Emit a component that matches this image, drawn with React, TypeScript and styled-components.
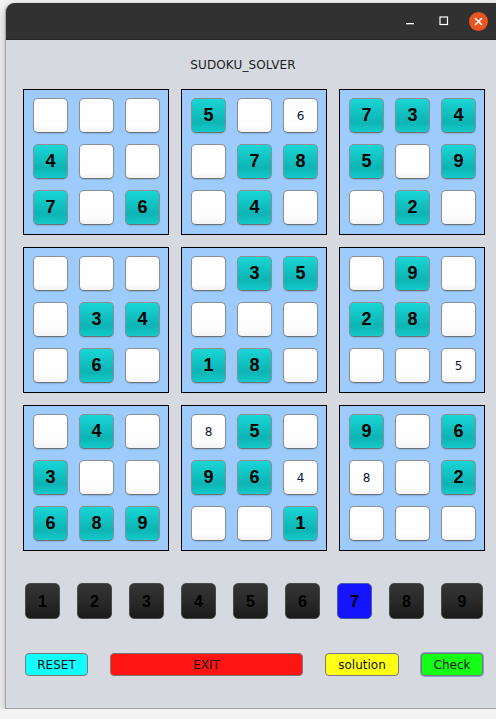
import React from "react";
import styled, { createGlobalStyle } from "styled-components";

const GlobalStyle = createGlobalStyle`
  html, body {
    margin: 0;
    padding: 0;
    background: #f3f3f3;
    overflow: hidden;
  }
  body {
    font-family: "DejaVu Sans", "Liberation Sans", sans-serif;
  }
`;

const Window = styled.div`
  margin: 3px 0 0 5px;
  width: 500px;
  height: 705px;
  border-radius: 9px 9px 0 0;
  overflow: hidden;
  background: #d6d9e0;
  border-left: 1px solid #a3a5aa;
  border-bottom: 1px solid #9d9fa4;
  box-shadow: 0 3px 10px rgba(0, 0, 0, 0.28);
  display: flex;
  flex-direction: column;
`;

const TitleBar = styled.div`
  height: 37px;
  flex: none;
  background: #323131;
  display: flex;
  align-items: center;
  justify-content: flex-end;
  padding-right: 11px;
  border-bottom: 1px solid #262626;
  box-sizing: border-box;
`;

const Control = styled.div`
  width: 34px;
  height: 24px;
  display: flex;
  align-items: center;
  justify-content: center;
`;

const CloseDot = styled.div`
  width: 19px;
  height: 19px;
  border-radius: 50%;
  background: #e95420;
  display: flex;
  align-items: center;
  justify-content: center;
`;

const Body = styled.div`
  display: flex;
  flex-direction: column;
  padding-left: 1px;
`;

const Heading = styled.div`
  width: 472px;
  padding-top: 18px;
  line-height: 15px;
  font-size: 12px;
  color: #1c1c1c;
  text-align: center;
  letter-spacing: 0.1px;
`;

const BoxGrid = styled.div`
  display: grid;
  grid-template-columns: repeat(3, 146px);
  grid-auto-rows: 146px;
  gap: 12px;
  margin: 16px 0 0 16px;
`;

const Box = styled.div`
  box-sizing: border-box;
  border: 1px solid #000;
  background: #9ccbfc;
  display: grid;
  grid-template-columns: repeat(3, 35px);
  grid-auto-rows: 35px;
  gap: 11px;
  padding: 8px 8px 9px 9px;
`;

const Cell = styled.div<{ $given: boolean }>`
  box-sizing: border-box;
  border-radius: 5px;
  border: 1px solid #8c8e92;
  border-bottom-color: #6f7175;
  box-shadow: 0 1px 1px rgba(0, 0, 0, 0.12);
  display: flex;
  align-items: center;
  justify-content: center;
  background: ${(p) =>
    p.$given
      ? "linear-gradient(to bottom, #1bd6d6 0%, #12c4c4 35%, #0db4b4 70%, #14caca 100%)"
      : "linear-gradient(to bottom, #ffffff 0%, #fdfdfd 80%, #f4f4f4 100%)"};
  font-family: ${(p) => (p.$given ? '"Liberation Sans", Arial, sans-serif' : '"DejaVu Sans", sans-serif')};
  font-weight: ${(p) => (p.$given ? 700 : 400)};
  font-size: ${(p) => (p.$given ? "18px" : "12px")};
  color: ${(p) => (p.$given ? "#000" : "#10163a")};
`;

const NumberRow = styled.div`
  display: flex;
  gap: 17px;
  margin: 32px 0 0 18px;
`;

const NumberKey = styled.div<{ $active?: boolean; $wide?: boolean }>`
  box-sizing: border-box;
  width: ${(p) => (p.$wide ? "42px" : "35px")};
  height: 36px;
  border-radius: 5px;
  border: 1px solid ${(p) => (p.$active ? "#4a58a8" : "#4a4a4a")};
  background: ${(p) =>
    p.$active ? "#1414ff" : "linear-gradient(to bottom, #353535 0%, #2a2a2a 50%, #1b1b1b 100%)"};
  display: flex;
  align-items: center;
  justify-content: center;
  padding-top: 2px;
  font-family: "Liberation Sans", Arial, sans-serif;
  font-weight: 700;
  font-size: 16px;
  color: #000;
`;

const ActionRow = styled.div`
  display: flex;
  gap: 22px;
  margin: 34px 0 0 18px;
`;

const Action = styled.div<{ $bg: string; $w: number; $focus?: boolean }>`
  box-sizing: border-box;
  width: ${(p) => p.$w}px;
  height: 23px;
  border-radius: 4px;
  border: 1px solid #7a7a7a;
  background: ${(p) => p.$bg};
  display: flex;
  align-items: center;
  justify-content: center;
  font-size: 12px;
  color: #111;
  box-shadow: ${(p) => (p.$focus ? "0 0 0 1px #7f9fcc" : "none")};
`;

const boxes: string[] = [
  "   4  7 6",
  "5 s 78 4 ",
  "7345 9 2 ",
  "    34 6 ",
  " 35   18 ",
  " 9 28   t",
  " 4 3  689",
  "u5 96v  1",
  "9 6w 2   ",
];

// lower-case letters mark the small, user-entered numbers
const small: Record<string, string> = { s: "6", t: "5", u: "8", v: "4", w: "8" };

function Sudoku() {
  return (
    <BoxGrid>
      {boxes.map((b, i) => (
        <Box key={i}>
          {b.split("").map((ch, j) => {
            if (ch === " ") return <Cell key={j} $given={false} />;
            if (small[ch]) return <Cell key={j} $given={false}>{small[ch]}</Cell>;
            return (
              <Cell key={j} $given>
                {ch}
              </Cell>
            );
          })}
        </Box>
      ))}
    </BoxGrid>
  );
}

export default function App() {
  return (
    <>
      <GlobalStyle />
      <Window>
        <TitleBar>
          <Control>
            <svg width="10" height="10" viewBox="0 0 10 10">
              <rect x="1" y="7" width="8" height="1.3" fill="#fff" />
            </svg>
          </Control>
          <Control>
            <svg width="10" height="10" viewBox="0 0 10 10">
              <rect x="1" y="1" width="7.5" height="7.5" fill="none" stroke="#fff" strokeWidth="1.2" />
            </svg>
          </Control>
          <Control>
            <CloseDot>
              <svg width="9" height="9" viewBox="0 0 9 9">
                <path d="M1 1 L8 8 M8 1 L1 8" stroke="#fff" strokeWidth="1.5" />
              </svg>
            </CloseDot>
          </Control>
        </TitleBar>
        <Body>
          <Heading>SUDOKU_SOLVER</Heading>
          <Sudoku />
          <NumberRow>
            {[1, 2, 3, 4, 5, 6, 7, 8, 9].map((n) => (
              <NumberKey key={n} $active={n === 7} $wide={n === 9}>
                {n}
              </NumberKey>
            ))}
          </NumberRow>
          <ActionRow>
            <Action $bg="#11ffff" $w={63}>RESET</Action>
            <Action $bg="#ff1414" $w={193}>EXIT</Action>
            <Action $bg="#ffff14" $w={74}>solution</Action>
            <Action $bg="#14ff14" $w={62} $focus>Check</Action>
          </ActionRow>
        </Body>
      </Window>
    </>
  );
}
